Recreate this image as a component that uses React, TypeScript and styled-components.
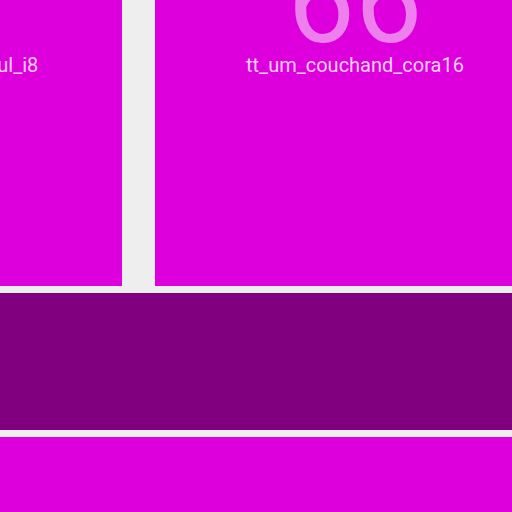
import React from "react";
import styled, { createGlobalStyle } from "styled-components";

const Global = createGlobalStyle`
  html, body {
    margin: 0;
    padding: 0;
    background: #eeeeee;
    overflow: hidden;
    width: 512px;
    height: 512px;
  }
  #root { width: 512px; height: 512px; overflow: hidden; }
`;

const Viewport = styled.div`
  width: 512px;
  height: 512px;
  overflow: hidden;
  background: #eeeeee;
`;

const Canvas = styled.div`
  display: flex;
  flex-direction: column;
  gap: 7px;
  width: 1300px;
  margin-top: -114px;
  margin-left: -278px;
`;

const TileRow = styled.div`
  display: flex;
  gap: 33px;
`;

const Tile = styled.div`
  width: 400px;
  height: 400px;
  flex: none;
  background: #dd00dd;
  display: flex;
  flex-direction: column;
  align-items: center;
  padding-top: 61px;
  box-sizing: border-box;
  font-family: Roboto, "Noto Sans", sans-serif;
`;

const Number = styled.div`
  font-size: 120px;
  line-height: 108px;
  color: rgba(255, 255, 255, 0.5);
  font-weight: 400;
`;

const Label = styled.div`
  font-size: 20px;
  line-height: 20px;
  color: rgba(255, 255, 255, 0.82);
  white-space: nowrap;
`;

const Band = styled.div<{ $color: string; $height: number }>`
  background: ${(p) => p.$color};
  height: ${(p) => p.$height}px;
  width: 100%;
`;

const tiles = [
  { num: "65", name: "tt_um_wokwi_mingsoul_i8" },
  { num: "66", name: "tt_um_couchand_cora16" },
];

export default function App() {
  return (
    <Viewport>
      <Global />
      <Canvas>
        <TileRow>
          {tiles.map((t) => (
            <Tile key={t.name}>
              <Number>{t.num}</Number>
              <Label>{t.name}</Label>
            </Tile>
          ))}
        </TileRow>
        <Band $color="#800080" $height={137} />
        <Band $color="#dd00dd" $height={200} />
      </Canvas>
    </Viewport>
  );
}
